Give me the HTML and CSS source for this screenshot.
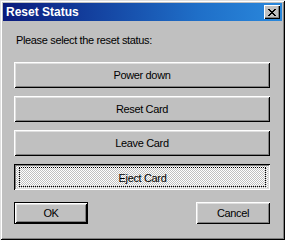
FILE: index.html
```html
<!DOCTYPE html>
<html lang="en">

<head>
	<meta charset="UTF-8">
	<title>Reset Status</title>
	<link rel="stylesheet" href="styles.css">
</head>

<body>
	<div class="window">
		<div class="titlebar">
			<span class="title">Reset Status</span>
			<button class="close" type="button">
				<svg width="8" height="7" viewBox="0 0 8 7" shape-rendering="crispEdges">
					<path d="M0 0h2v1h-2zM6 0h2v1h-2zM1 1h2v1h-2zM5 1h2v1h-2zM2 2h4v1h-4zM3 3h2v1h-2zM2 4h4v1h-4zM1 5h2v1h-2zM5 5h2v1h-2zM0 6h2v1h-2zM6 6h2v1h-2z" fill="#000"/>
				</svg>
			</button>
		</div>
		<div class="content">
			<p class="prompt">Please select the reset status:</p>
			<div class="choices">
				<button class="btn wide" type="button">Power down</button>
				<button class="btn wide" type="button">Reset Card</button>
				<button class="btn wide" type="button">Leave Card</button>
				<button class="btn wide pressed" type="button"><span class="focus">Eject Card</span></button>
			</div>
			<div class="actions">
				<button class="btn small default" type="button">OK</button>
				<button class="btn small" type="button">Cancel</button>
			</div>
		</div>
	</div>
</body>

</html>
```

FILE: styles.css
```css
* {
	padding: 0;
	margin: 0;
	box-sizing: border-box;
}

body {
	background: #c0c0c0;
	font-family: "Liberation Sans", Arial, sans-serif;
	font-size: 11px;
	letter-spacing: -0.35px;
	color: #000;
}

.window {
	width: 285px;
	height: 240px;
	padding: 3px;
	background: #c0c0c0;
	box-shadow: inset 1px 1px 0 #dfdfdf, inset -1px -1px 0 #000,
		inset 2px 2px 0 #fff, inset -2px -2px 0 #808080;
}

.titlebar {
	height: 18px;
	display: flex;
	align-items: center;
	justify-content: space-between;
	padding: 0 2px 0 3px;
	background: linear-gradient(to right, #0a1a7c, #1f6fc8 70%, #2a88dc);
}

.title {
	font-size: 12px;
	font-weight: bold;
	letter-spacing: 0;
	color: #fff;
}

.close {
	width: 16px;
	height: 14px;
	border: 0;
	display: flex;
	align-items: center;
	justify-content: center;
	background: #c0c0c0;
	box-shadow: inset 1px 1px 0 #fff, inset -1px -1px 0 #000,
		inset -2px -2px 0 #808080;
	font: inherit;
}

.content {
	padding: 13px 12px 0 11px;
}

.prompt {
	line-height: 13px;
	padding-left: 2px;
}

.choices {
	margin-top: 15px;
	display: flex;
	flex-direction: column;
	gap: 8px;
}

.btn {
	border: 0;
	background: #c0c0c0;
	font: inherit;
	letter-spacing: inherit;
	color: #000;
	box-shadow: inset 1px 1px 0 #fff, inset -1px -1px 0 #000,
		inset 2px 2px 0 #dfdfdf, inset -2px -2px 0 #808080;
}

.wide {
	height: 26px;
	width: 100%;
}

.pressed {
	padding: 3px 4px 3px 5px;
	display: flex;
	box-shadow: inset 1px 1px 0 #000, inset -1px -1px 0 #fff,
		inset 2px 2px 0 #808080, inset -2px -2px 0 #dfdfdf;
	background: repeating-conic-gradient(#fff 0 25%, #c0c0c0 0 50%) 0 0 / 2px 2px;
}

.focus {
	flex: 1;
	display: flex;
	align-items: center;
	justify-content: center;
	padding-top: 1px;
	border: 1px dotted #000;
}

.actions {
	margin-top: 12px;
	display: flex;
	justify-content: space-between;
}

.small {
	width: 74px;
	height: 22px;
}

.default {
	border: 1px solid #000;
	box-shadow: inset 1px 1px 0 #fff, inset -1px -1px 0 #000,
		inset 2px 2px 0 #dfdfdf, inset -2px -2px 0 #808080;
}
```
